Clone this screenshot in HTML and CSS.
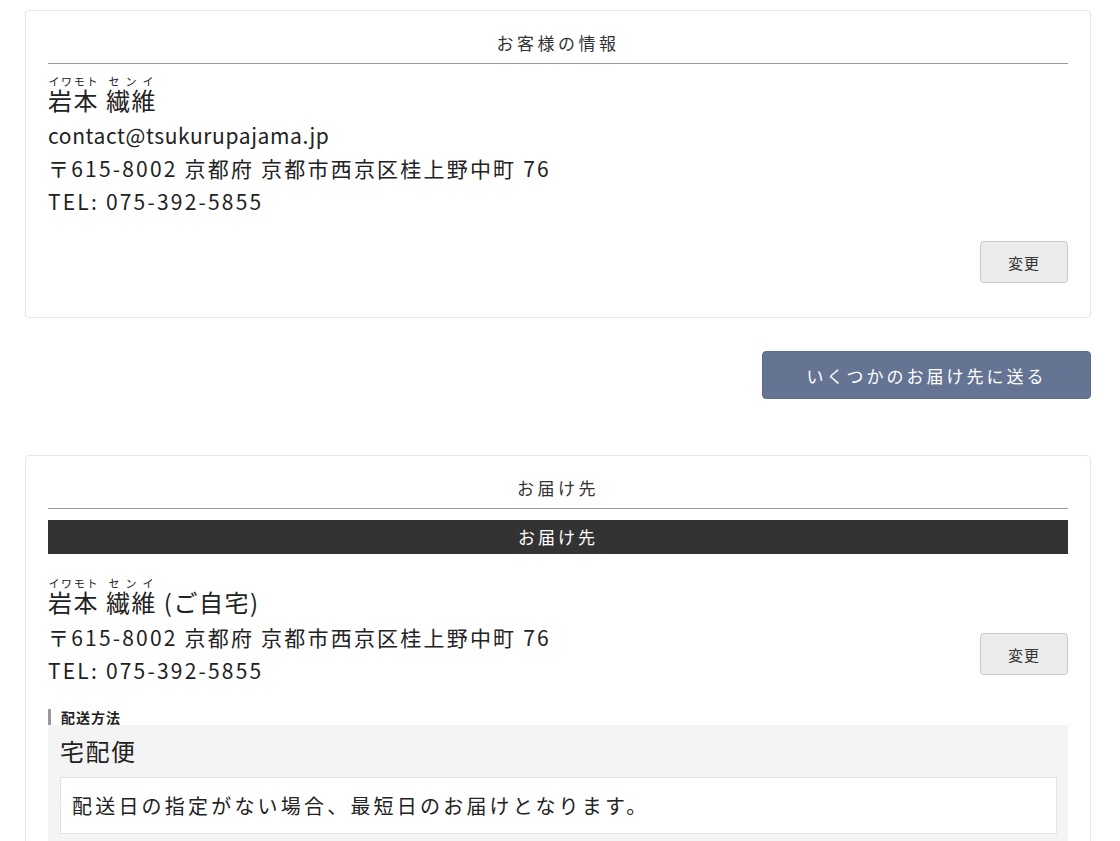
FILE: index.html
```html
<!DOCTYPE html>
<html lang="ja">
<head>
    <meta charset="UTF-8">
    <meta name="viewport" content="width=device-width, initial-scale=1.0">
    <title>ご注文手続き</title>
    <link rel="stylesheet" href="styles.css">
</head>
<body>
    <div class="checkout">
        <section class="card">
            <h2 class="card-title">お客様の情報</h2>
            <div class="customer">
                <p class="name"><ruby>岩本<rt>イワモト</rt></ruby> <ruby>繊維<rt>センイ</rt></ruby></p>
                <p class="email">contact@tsukurupajama.jp</p>
                <p>〒615-8002 京都府 京都市西京区桂上野中町 76</p>
                <p>TEL: 075-392-5855</p>
            </div>
            <div class="card-actions">
                <button class="btn-change">変更</button>
            </div>
        </section>

        <div class="multi-ship">
            <button class="btn-multi">いくつかのお届け先に送る</button>
        </div>

        <section class="card">
            <h2 class="card-title">お届け先</h2>
            <div class="ship-bar">お届け先</div>
            <div class="ship-address">
                <div class="customer">
                    <p class="name"><ruby>岩本<rt>イワモト</rt></ruby> <ruby>繊維<rt>センイ</rt></ruby> (ご自宅)</p>
                    <p>〒615-8002 京都府 京都市西京区桂上野中町 76</p>
                    <p>TEL: 075-392-5855</p>
                </div>
                <button class="btn-change">変更</button>
            </div>
            <h3 class="sub-label">配送方法</h3>
            <div class="delivery">
                <p class="delivery-name">宅配便</p>
                <div class="delivery-note">配送日の指定がない場合、最短日のお届けとなります。</div>
            </div>
        </section>
    </div>
</body>
</html>
```

FILE: styles.css
```css
/* 注文手続き画面 */
body {
    margin: 0;
    font-family: "Noto Sans CJK JP", "Noto Sans", sans-serif;
    color: #222;
    background: #fff;
}
p { margin: 0; }

.checkout {
    padding: 10px 29px 0 25px;
}

.card {
    border: 1px solid #e6e6e6;
    border-radius: 4px;
    padding: 0 22px 34px;
}

.card-title {
    margin: 0;
    padding: 20px 0 8px;
    font-size: 17px;
    font-weight: 400;
    line-height: 24px;
    letter-spacing: 3.5px;
    text-align: center;
    color: #333;
    border-bottom: 1px solid #9a9a9a;
}

.customer {
    font-size: 21px;
    line-height: 33px;
    letter-spacing: 2.2px;
}
.customer .name {
    font-size: 24px;
    line-height: 36px;
    letter-spacing: 1.5px;
    padding-top: 18px;
    margin-bottom: 1px;
}
.customer rt {
    font-size: 11px;
    letter-spacing: 1px;
}
.customer .email {
    letter-spacing: 0.6px;
}

.card-actions {
    display: flex;
    justify-content: flex-end;
    margin-top: 23px;
}

.btn-change {
    width: 88px;
    height: 42px;
    background: #ececec;
    border: 1px solid #c8c8c8;
    border-radius: 4px;
    font-family: inherit;
    font-size: 15px;
    color: #333;
    letter-spacing: 1px;
}

.multi-ship {
    display: flex;
    justify-content: flex-end;
    margin: 33px 0 56px;
}
.btn-multi {
    width: 329px;
    height: 48px;
    background: #657493;
    border: 1px solid #5c6a87;
    border-radius: 4px;
    color: #fff;
    font-family: inherit;
    font-size: 17px;
    letter-spacing: 3px;
}

.ship-bar {
    margin-top: 11px;
    height: 34px;
    line-height: 34px;
    background: #333;
    color: #fff;
    text-align: center;
    font-size: 17px;
    letter-spacing: 3px;
}

.ship-address {
    display: flex;
    justify-content: space-between;
    align-items: flex-end;
}
.ship-address .name {
    padding-top: 30px;
}
.ship-address .btn-change {
    margin-bottom: 12px;
}

.sub-label {
    margin: 22px 0 0;
    padding-left: 10px;
    border-left: 3px solid #999;
    font-size: 14px;
    line-height: 16px;
    font-weight: 700;
    letter-spacing: 1px;
}

.delivery {
    background: #f4f4f4;
    padding: 10px 11px 11px 12px;
}
.delivery-name {
    font-size: 24px;
    line-height: 32px;
    letter-spacing: 1.5px;
    margin-bottom: 10px;
}
.delivery-note {
    background: #fff;
    border: 1px solid #e3e3e3;
    padding: 12px 11px;
    font-size: 20px;
    line-height: 31px;
    letter-spacing: 3.2px;
}
```
